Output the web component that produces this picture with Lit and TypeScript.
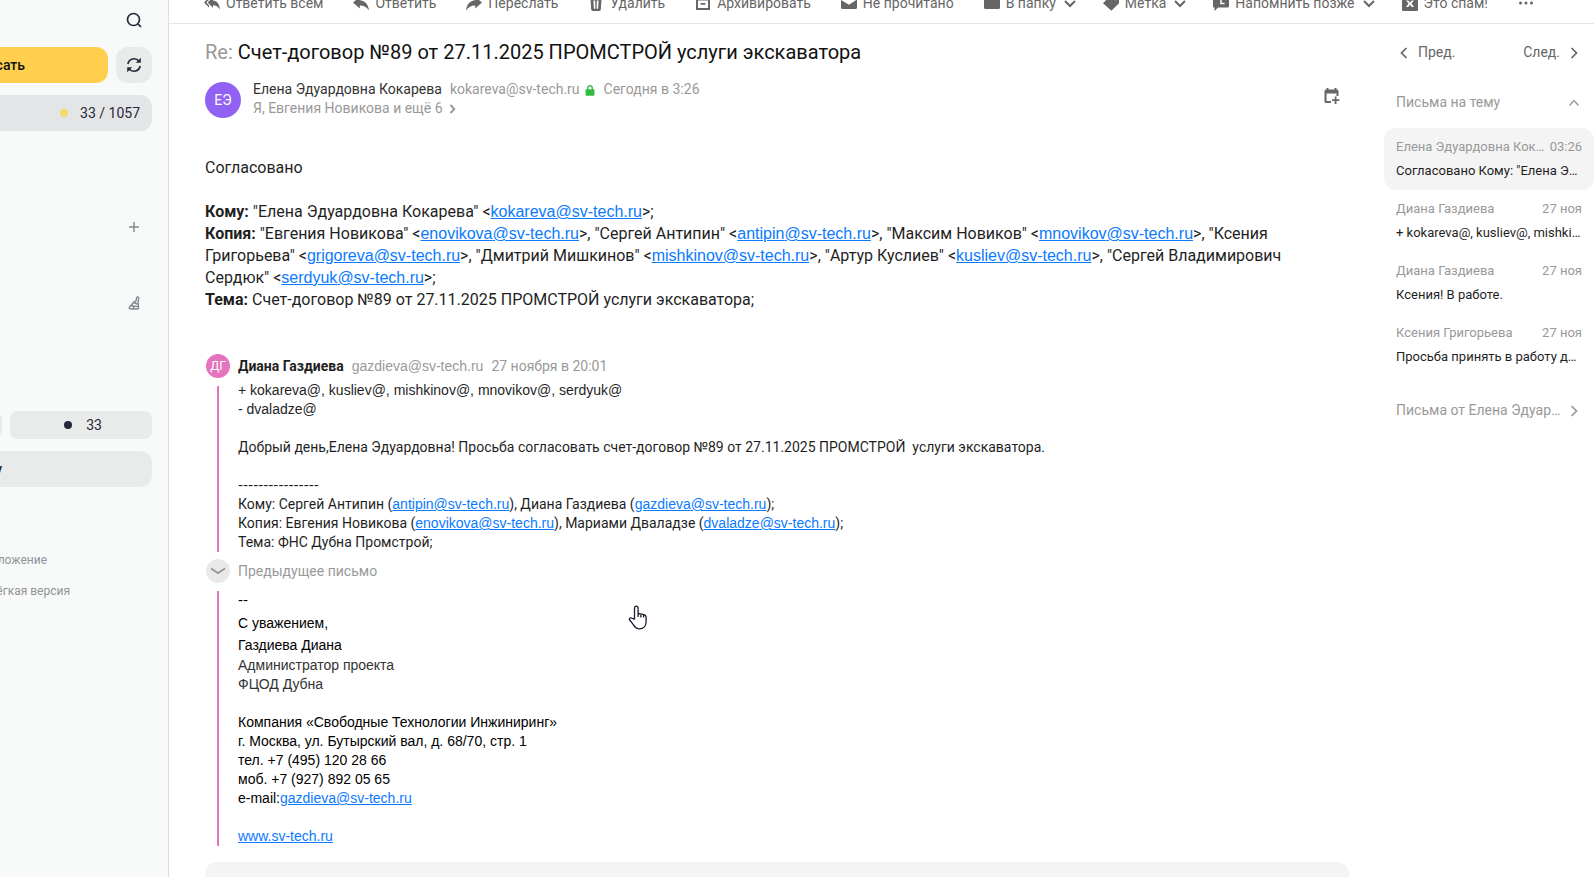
import { LitElement, html, svg, css } from "lit";
import { customElement, property } from "lit/decorators.js";

const glyphs: Record<string, unknown> = {
  replyAll: svg`<path d="M5 2.5 0 7.5l5 5v-2.2L2.3 7.5 5 4.7z"/><path d="M9 2.2v3.4c4 .3 6.400 3.500 7 9-1.800-3-3.900-4.200-7-4.300v2.500L3.600 7.500z"/>`,
  reply: svg`<path d="M6.800 1.800v3.500c5.300.4 8.400 3.900 9.200 10.200-2.400-3.500-5.100-4.900-9.200-5v3.100L0 7.600z"/>`,
  forward: svg`<path d="M9.200 1.800v3.500C3.900 5.700.8 9.200 0 15.500c2.400-3.500 5.100-4.900 9.200-5v3.100L16 7.600z"/>`,
  trash: svg`<path d="M2 1h12v2H2z"/><path fill-rule="evenodd" d="M2.500 4h11l-.7 10.500a1.500 1.500 0 0 1-1.500 1.400H4.700a1.500 1.500 0 0 1-1.500-1.400zM5.400 5.500l.5 8.300h1.500L7.200 5.500zm3.400 0-.2 8.300h1.500l.5-8.300z"/>`,
  archive: svg`<path fill-rule="evenodd" d="M1 1h14v14H1zm2 4.500V13h10V5.500z"/><path d="M5.500 8h5v1.700h-5z"/>`,
  mail: svg`<path d="M0 2v10.500A1.500 1.500 0 0 0 1.500 14h13a1.500 1.500 0 0 0 1.500-1.500V4.500L8 9.800 0 5z"/>`,
  folder: svg`<path d="M0 2h6l2 2h8v8.500a1.500 1.500 0 0 1-1.500 1.500h-13A1.500 1.500 0 0 1 0 12.500z"/>`,
  tag: svg`<path fill-rule="evenodd" d="M8 0h8v8.200l-7.600 7.500L0 8.200zm4.500 2.500a1.400 1.400 0 1 0 0 2.800 1.400 1.400 0 0 0 0-2.800z"/>`,
  remind: svg`<path fill-rule="evenodd" d="M1.500 0h13A1.500 1.500 0 0 1 16 1.500V11a1.500 1.500 0 0 1-1.500 1.500H5L1.500 16v-3.500H1.300A1.300 1.300 0 0 1 0 11.200V1.500A1.500 1.500 0 0 1 1.500 0zM7.200 4v5.300H11.500V7.800H8.700V4z"/>`,
  spam: svg`<path fill-rule="evenodd" d="M1.500 0h13A1.500 1.500 0 0 1 16 1.500v13a1.500 1.500 0 0 1-1.500 1.500h-13A1.500 1.500 0 0 1 0 14.500v-13A1.500 1.500 0 0 1 1.500 0zM4 5.500 6.600 8.600 4 12h2.200L8 9.800 9.800 12H12L9.400 8.600 12 5.500H9.800L8 7.500 6.200 5.500z"/>`,
  dots: svg`<circle cx="2.500" cy="8" r="1.500"/><circle cx="8" cy="8" r="1.500"/><circle cx="13.500" cy="8" r="1.500"/>`,
  down: svg`<path class="line" d="m3 6 5 5 5-5" stroke-width="2"/>`,
  left: svg`<path class="line" d="M10.500 3 5.500 8l5 5" stroke-width="1.700"/>`,
  right: svg`<path class="line" d="m5.500 3 5 5-5 5" stroke-width="1.700"/>`,
  up: svg`<path class="line" d="m3.500 10.500 4.500-5 4.500 5" stroke-width="1.400"/>`,
  more: svg`<path class="line" d="m5.500 4 3.800 4-3.800 4" stroke-width="2"/>`,
  expand: svg`<path class="line" d="m1 5.500 7 4.500 7-4.500" stroke-width="2"/>`,
  search: svg`<circle class="line" cx="7.500" cy="7.500" r="6" stroke-width="1.700"/><path class="line" d="m12 12 3 3" stroke-width="1.700"/>`,
  refresh: svg`<path class="line" d="M1.900 7A6.200 6.200 0 0 1 13 4.300M14.100 9A6.200 6.200 0 0 1 3 11.700" stroke-width="1.700"/><path d="M14.800.8v5H9.800zM1.200 15.200v-5h5z"/>`,
  plus: svg`<path class="line" d="M8 3v10M3 8h10" stroke-width="1.400"/>`,
  broom: svg`<path class="line" d="M10.800 2.600c.4-1 2.200-.4 2 .8l-.8 4 .6 5.300c0 .8-.4 1.300-1.200 1.300H5c-1.700 0-2.600-1.300-1.200-2.300 1.500-1 2.600-2.500 3.600-4.400l2.300-.9zM7.300 7.500l4.900 1.800M5.500 10.800l6.500.8M7.300 13.500l.8-1.700" stroke-width="1.400"/>`,
  lock: svg`<path d="M3 7h10a.9.9 0 0 1 .9.9v6.800a1 1 0 0 1-1 1H3.100a1 1 0 0 1-1-1V7.900A.9.900 0 0 1 3 7z"/><path class="line" d="M5 8V5.200a3 3 0 0 1 6 0V8" stroke-width="1.800"/>`,
  calendar: svg`<path fill-rule="evenodd" d="M2.500 0h2v1.500h6V0h2v1.500H13A1.500 1.500 0 0 1 14.500 3v5h-2V5.500H2.500V13H7v2H2a1.500 1.500 0 0 1-1.500-1.500V3A1.500 1.500 0 0 1 2 1.500h.5z"/><path d="M10.700 8.500h1.800v2.700h2.900V13h-2.900v3h-1.800v-3H8v-1.800h2.700z"/>`,
};

@customElement("mail-icon")
class MailIcon extends LitElement {
  static styles = css`
    :host { display: inline-flex; flex: none; width: 16px; height: 16px; }
    svg { width: 100%; height: 100%; fill: currentColor; }
    .line { fill: none; stroke: currentColor; }
  `;
  @property() name = "";
  render() {
    return html`<svg viewBox="0 0 16 16" aria-hidden="true">${glyphs[this.name]}</svg>`;
  }
}

const actions = [
  { icon: "replyAll", label: "Ответить всем" },
  { icon: "reply", label: "Ответить" },
  { icon: "forward", label: "Переслать" },
  { icon: "trash", label: "Удалить" },
  { icon: "archive", label: "Архивировать" },
  { icon: "mail", label: "Не прочитано" },
  { icon: "folder", label: "В папку", menu: true },
  { icon: "tag", label: "Метка", menu: true },
  { icon: "remind", label: "Напомнить позже", menu: true },
  { icon: "spam", label: "Это спам!" },
];

const thread = [
  { from: "Елена Эдуардовна Кокарева", date: "03:26", text: 'Согласовано Кому: "Елена Эдуардовна Кокарева"', current: true },
  { from: "Диана Газдиева", date: "27 ноя", text: "+ kokareva@, kusliev@, mishkinov@, mnovikov@" },
  { from: "Диана Газдиева", date: "27 ноя", text: "Ксения! В работе." },
  { from: "Ксения Григорьева", date: "27 ноя", text: "Просьба принять в работу договор" },
];

const copies = [
  ["Евгения Новикова", "enovikova"],
  ["Сергей Антипин", "antipin"],
  ["Максим Новиков", "mnovikov"],
  ["Ксения Григорьева", "grigoreva"],
  ["Дмитрий Мишкинов", "mishkinov"],
  ["Артур Куслиев", "kusliev"],
  ["Сергей Владимирович Сердюк", "serdyuk"],
];

const mail = (user: string) => html`<a href="mailto:${user}@sv-tech.ru">${user}@sv-tech.ru</a>`;

@customElement("app-root")
class AppRoot extends LitElement {
  static styles = css`
    :host { display: block; font: 14px/19px Roboto, "Noto Sans", sans-serif; color: #1f1f1f; }
    * { box-sizing: border-box; }
    button { font: inherit; color: inherit; background: none; border: 0; padding: 0; margin: 0; cursor: pointer; }
    p, h1 { margin: 0; font: inherit; }
    a { color: #0a7aff; }
    .app { display: flex; height: 100vh; overflow: hidden; background: #fff; }

    .side { flex: 0 0 169px; display: flex; justify-content: flex-end; overflow: hidden; background: #f8faf9; border-right: 1px solid #dcdedf; color: #28283a; }
    .side-inner { flex: 0 0 300px; display: flex; flex-direction: column; padding: 12px 16px 0; }
    .end { display: flex; justify-content: flex-end; padding-right: 10px; }
    .end button { display: flex; }
    .compose-row { display: flex; gap: 8px; margin: 19px 0 12px; }
    .compose { flex: 1; height: 36px; padding-right: 83px; border-radius: 12px; background: #ffcf4d; color: #111; font-weight: 500; text-align: right; }
    .refresh { display: flex; align-items: center; justify-content: center; width: 36px; height: 36px; border-radius: 12px; background: #e9eaea; }
    .inbox { display: flex; align-items: center; justify-content: flex-end; gap: 12px; height: 36px; padding-right: 12px; border-radius: 12px; background: #e4e5e7; color: #28283a; text-decoration: none; }
    .dot { width: 8px; height: 8px; border-radius: 50%; background: #f6d966; }
    .dark { background: #28283a; }
    .muted-icon { color: #85868f; }
    .add { margin-top: 88px; }
    .clean { margin: 60px 0 100px; }
    .filters { display: flex; gap: 8px; }
    .filter { display: flex; flex: 0 0 142px; align-items: center; justify-content: center; gap: 14px; height: 28px; padding-left: 4px; border-radius: 8px; background: #e9eaea; }
    .rest { flex: 1; }
    .wide { height: 36px; margin: 12px 0 64px; padding-right: 150px; border-radius: 12px; background: #e9eaea; font-weight: 500; text-align: right; }
    .foot { display: flex; justify-content: flex-end; margin-bottom: 12px; font-size: 12px; color: #919397; text-decoration: none; }
    .foot-app { padding-right: 105px; }
    .foot-lite { padding-right: 82px; }

    .main { flex: 1; min-width: 0; display: flex; flex-direction: column; }
    .toolbar { display: flex; flex: none; align-items: center; gap: 30px; height: 41px; margin-top: -17px; padding-left: 35px; border-bottom: 1px solid #e5e5e5; color: #666; white-space: nowrap; }
    .action { display: flex; align-items: center; gap: 6px; height: 40px; }
    .menu { margin-right: -5px; }
    .columns { flex: 1; min-height: 0; display: flex; gap: 35px; padding-left: 36px; }
    .letter { flex: 1; min-width: 0; }
    .letter a, .latin { font-family: "Liberation Sans", Arial, sans-serif; }

    .subject { padding-top: 16px; font-size: 20px; line-height: 24px; color: #111; }
    .re, .soft { color: #999; }
    .head { display: flex; align-items: flex-end; gap: 12px; margin-top: 16px; }
    .ava { display: flex; flex: none; align-items: center; justify-content: center; border-radius: 50%; color: #fff; background: #9061f3; width: 36px; height: 36px; }
    .who { flex: 1; }
    .line { display: flex; align-items: center; gap: 8px; }
    .sender { color: #333; }
    .addr { display: flex; align-items: center; gap: 4px; color: #999; }
    .lock { width: 12px; height: 12px; color: #32ba43; }
    .rcpt { display: flex; align-items: center; gap: 2px; color: #999; }
    .cal { display: flex; color: #666; margin: 0 9px 14px 0; }
    .body { margin-top: 39px; padding-right: 20px; font-size: 16px; line-height: 22px; }
    .blank { height: 22px; }

    .quote { display: grid; grid-template-columns: 24px 1fr; column-gap: 8px; margin: 43px 0 0 1px; align-items: center; }
    .mini { width: 24px; height: 24px; font-size: 12px; background: #e573bd; }
    .qname { font-weight: 700; }
    .bar { justify-self: center; align-self: stretch; width: 2px; margin-top: 8px; background: #e573bd; }
    .qtext { margin-top: 3px; }
    .toggle { display: flex; align-items: center; justify-content: center; width: 24px; height: 24px; margin-top: 7px; border-radius: 50%; background: #e9e9e9; color: #999; }
    .prev { justify-self: start; margin-top: 7px; color: #999; }
    .sign { margin-top: 8px; font-family: "Liberation Sans", Arial, sans-serif; color: #000; }
    .dash { font-family: "DejaVu Sans", sans-serif; }
    .tall { line-height: 22px; }
    .first { margin-top: 2px; }
    .role { color: #333; }
    .gap { height: 19px; }
    .answer { display: block; width: 100%; height: 60px; margin-top: 16px; padding: 12px; border: 0; border-radius: 12px; background: #f4f4f4; resize: none; }

    .aside { flex: 0 0 210px; min-width: 0; padding-top: 19px; font-size: 13px; }
    .pager { display: flex; justify-content: space-between; padding: 0 12px; color: #666; font-size: 14px; }
    .pager button { display: flex; align-items: center; gap: 6px; }
    .group { display: flex; align-items: center; justify-content: space-between; gap: 2px; width: 100%; padding: 0 12px; color: #999; font-size: 14px; text-align: left; }
    .topic { margin: 31px 0 16px; }
    .item { display: block; padding: 9px 12px 10px; border-radius: 12px; text-decoration: none; color: #1f1f1f; }
    .current { background: #f4f4f4; }
    .meta { display: flex; justify-content: space-between; gap: 2px; margin-bottom: 5px; color: #999; }
    .cut { min-width: 0; overflow: hidden; white-space: nowrap; text-overflow: ellipsis; }
    .snippet { display: block; }
    .date { flex: none; }
    .from-group { margin-top: 25px; }
    .pointer { position: absolute; left: 628px; top: 605px; width: 19px; height: 25px; }
  `;

  render() {
    return html`
      <div class="app">
        <aside class="side">
          <div class="side-inner">
            <div class="end"><button aria-label="Поиск"><mail-icon name="search"></mail-icon></button></div>
            <div class="compose-row">
              <button class="compose">Написать</button>
              <button class="refresh" aria-label="Обновить"><mail-icon name="refresh"></mail-icon></button>
            </div>
            <a class="inbox" href="#inbox"><span class="dot"></span><span>33 / 1057</span></a>
            <div class="end add muted-icon"><button aria-label="Создать папку"><mail-icon name="plus"></mail-icon></button></div>
            <div class="end clean muted-icon"><button aria-label="Очистить"><mail-icon name="broom"></mail-icon></button></div>
            <div class="filters">
              <button class="filter rest" aria-label="Все письма"></button>
              <button class="filter"><span class="dot dark"></span><span>33</span></button>
            </div>
            <button class="wide">Создать папку</button>
            <a class="foot foot-app" href="#app">Мобильное приложение</a>
            <a class="foot foot-lite" href="#lite">Лёгкая версия</a>
          </div>
        </aside>

        <main class="main">
          <nav class="toolbar">
            ${actions.map((a) => html`
              <button class="action ${a.menu ? "menu" : ""}">
                <mail-icon name=${a.icon}></mail-icon><span>${a.label}</span>
                ${a.menu ? html`<mail-icon name="down"></mail-icon>` : ""}
              </button>`)}
            <button class="action" aria-label="Ещё"><mail-icon name="dots"></mail-icon></button>
          </nav>

          <div class="columns">
            <article class="letter">
              <h1 class="subject"><span class="re">Re:</span> Счет-договор №89 от 27.11.2025 ПРОМСТРОЙ услуги экскаватора</h1>
              <header class="head">
                <div class="ava">ЕЭ</div>
                <div class="who">
                  <div class="line">
                    <span class="sender">Елена Эдуардовна Кокарева</span>
                    <span class="addr">kokareva@sv-tech.ru <mail-icon class="lock" name="lock"></mail-icon></span>
                    <span class="soft">Сегодня в 3:26</span>
                  </div>
                  <button class="rcpt">Я, Евгения Новикова и ещё 6 <mail-icon name="more"></mail-icon></button>
                </div>
                <button class="cal" aria-label="Создать событие"><mail-icon name="calendar"></mail-icon></button>
              </header>

              <div class="body">
                <p>Согласовано</p>
                <div class="blank"></div>
                <p><b>Кому:</b> "Елена Эдуардовна Кокарева" &lt;${mail("kokareva")}&gt;;</p>
                <p><b>Копия:</b> ${copies.map(([n, u], i) => html`"${n}" &lt;${mail(u)}&gt;${i < copies.length - 1 ? ", " : ";"}`)}</p>
                <p><b>Тема:</b> Счет-договор №89 от 27.11.2025 ПРОМСТРОЙ услуги экскаватора;</p>
              </div>

              <section class="quote">
                <div class="ava mini">ДГ</div>
                <div class="line">
                  <span class="qname">Диана Газдиева</span>
                  <span class="soft latin">gazdieva@sv-tech.ru</span>
                  <span class="soft">27 ноября в 20:01</span>
                </div>
                <div class="bar"></div>
                <div class="qtext">
                  <p class="latin">+ kokareva@, kusliev@, mishkinov@, mnovikov@, serdyuk@</p>
                  <p class="latin">- dvaladze@</p>
                  <div class="gap"></div>
                  <p>Добрый день,Елена Эдуардовна! Просьба согласовать счет-договор №89 от 27.11.2025 ПРОМСТРОЙ&nbsp; услуги экскаватора.</p>
                  <div class="gap"></div>
                  <p class="dash">----------------</p>
                  <p>Кому: Сергей Антипин (${mail("antipin")}), Диана Газдиева (${mail("gazdieva")});</p>
                  <p>Копия: Евгения Новикова (${mail("enovikova")}), Мариами Дваладзе (${mail("dvaladze")});</p>
                  <p>Тема: ФНС Дубна Промстрой;</p>
                </div>
                <button class="toggle" aria-label="Показать предыдущее письмо"><mail-icon name="expand"></mail-icon></button>
                <button class="prev">Предыдущее письмо</button>
                <div class="bar"></div>
                <div class="sign">
                  <p class="dash">--</p>
                  <p class="tall first">С уважением,</p>
                  <p class="tall">Газдиева Диана</p>
                  <p class="role">Администратор проекта</p>
                  <p class="role">ФЦОД Дубна</p>
                  <div class="gap"></div>
                  <p>Компания «Свободные Технологии Инжиниринг»</p>
                  <p>г. Москва, ул. Бутырский вал, д. 68/70, стр. 1</p>
                  <p>тел. +7 (495) 120 28 66</p>
                  <p>моб. +7 (927) 892 05 65</p>
                  <p>e-mail:${mail("gazdieva")}</p>
                  <div class="gap"></div>
                  <p><a href="http://www.sv-tech.ru">www.sv-tech.ru</a></p>
                </div>
              </section>
              <textarea class="answer" aria-label="Ответ"></textarea>
            </article>

            <aside class="aside">
              <div class="pager">
                <button><mail-icon name="left"></mail-icon>Пред.</button>
                <button>След.<mail-icon name="right"></mail-icon></button>
              </div>
              <button class="group topic">Письма на тему <mail-icon name="up"></mail-icon></button>
              ${thread.map((t) => html`
                <a class="item ${t.current ? "current" : ""}" href="#message">
                  <span class="meta"><span class="cut">${t.from}</span><span class="date">${t.date}</span></span>
                  <span class="cut snippet">${t.text}</span>
                </a>`)}
              <button class="group from-group"><span class="cut">Письма от Елена Эдуардовна</span> <mail-icon name="right"></mail-icon></button>
            </aside>
          </div>
        </main>
        <svg class="pointer" viewBox="0 0 19 25" aria-hidden="true">
          <path d="M6.500 14V3a1.800 1.800 0 0 1 3.600 0v5.500l5 .8c2 .4 3 1 3 3v4.500c0 4-2.500 7-6.600 7-3 0-4.500-1.500-6-4L1.400 14.500c-.6-1.400 1.200-2.200 2.600-1.200zM10.100 8.500v3.500M12.800 9v3.500M15.500 9.500v3" fill="#fff" stroke="#1c1c30" stroke-width="1.300" stroke-linejoin="round"/>
        </svg>
      </div>`;
  }
}
